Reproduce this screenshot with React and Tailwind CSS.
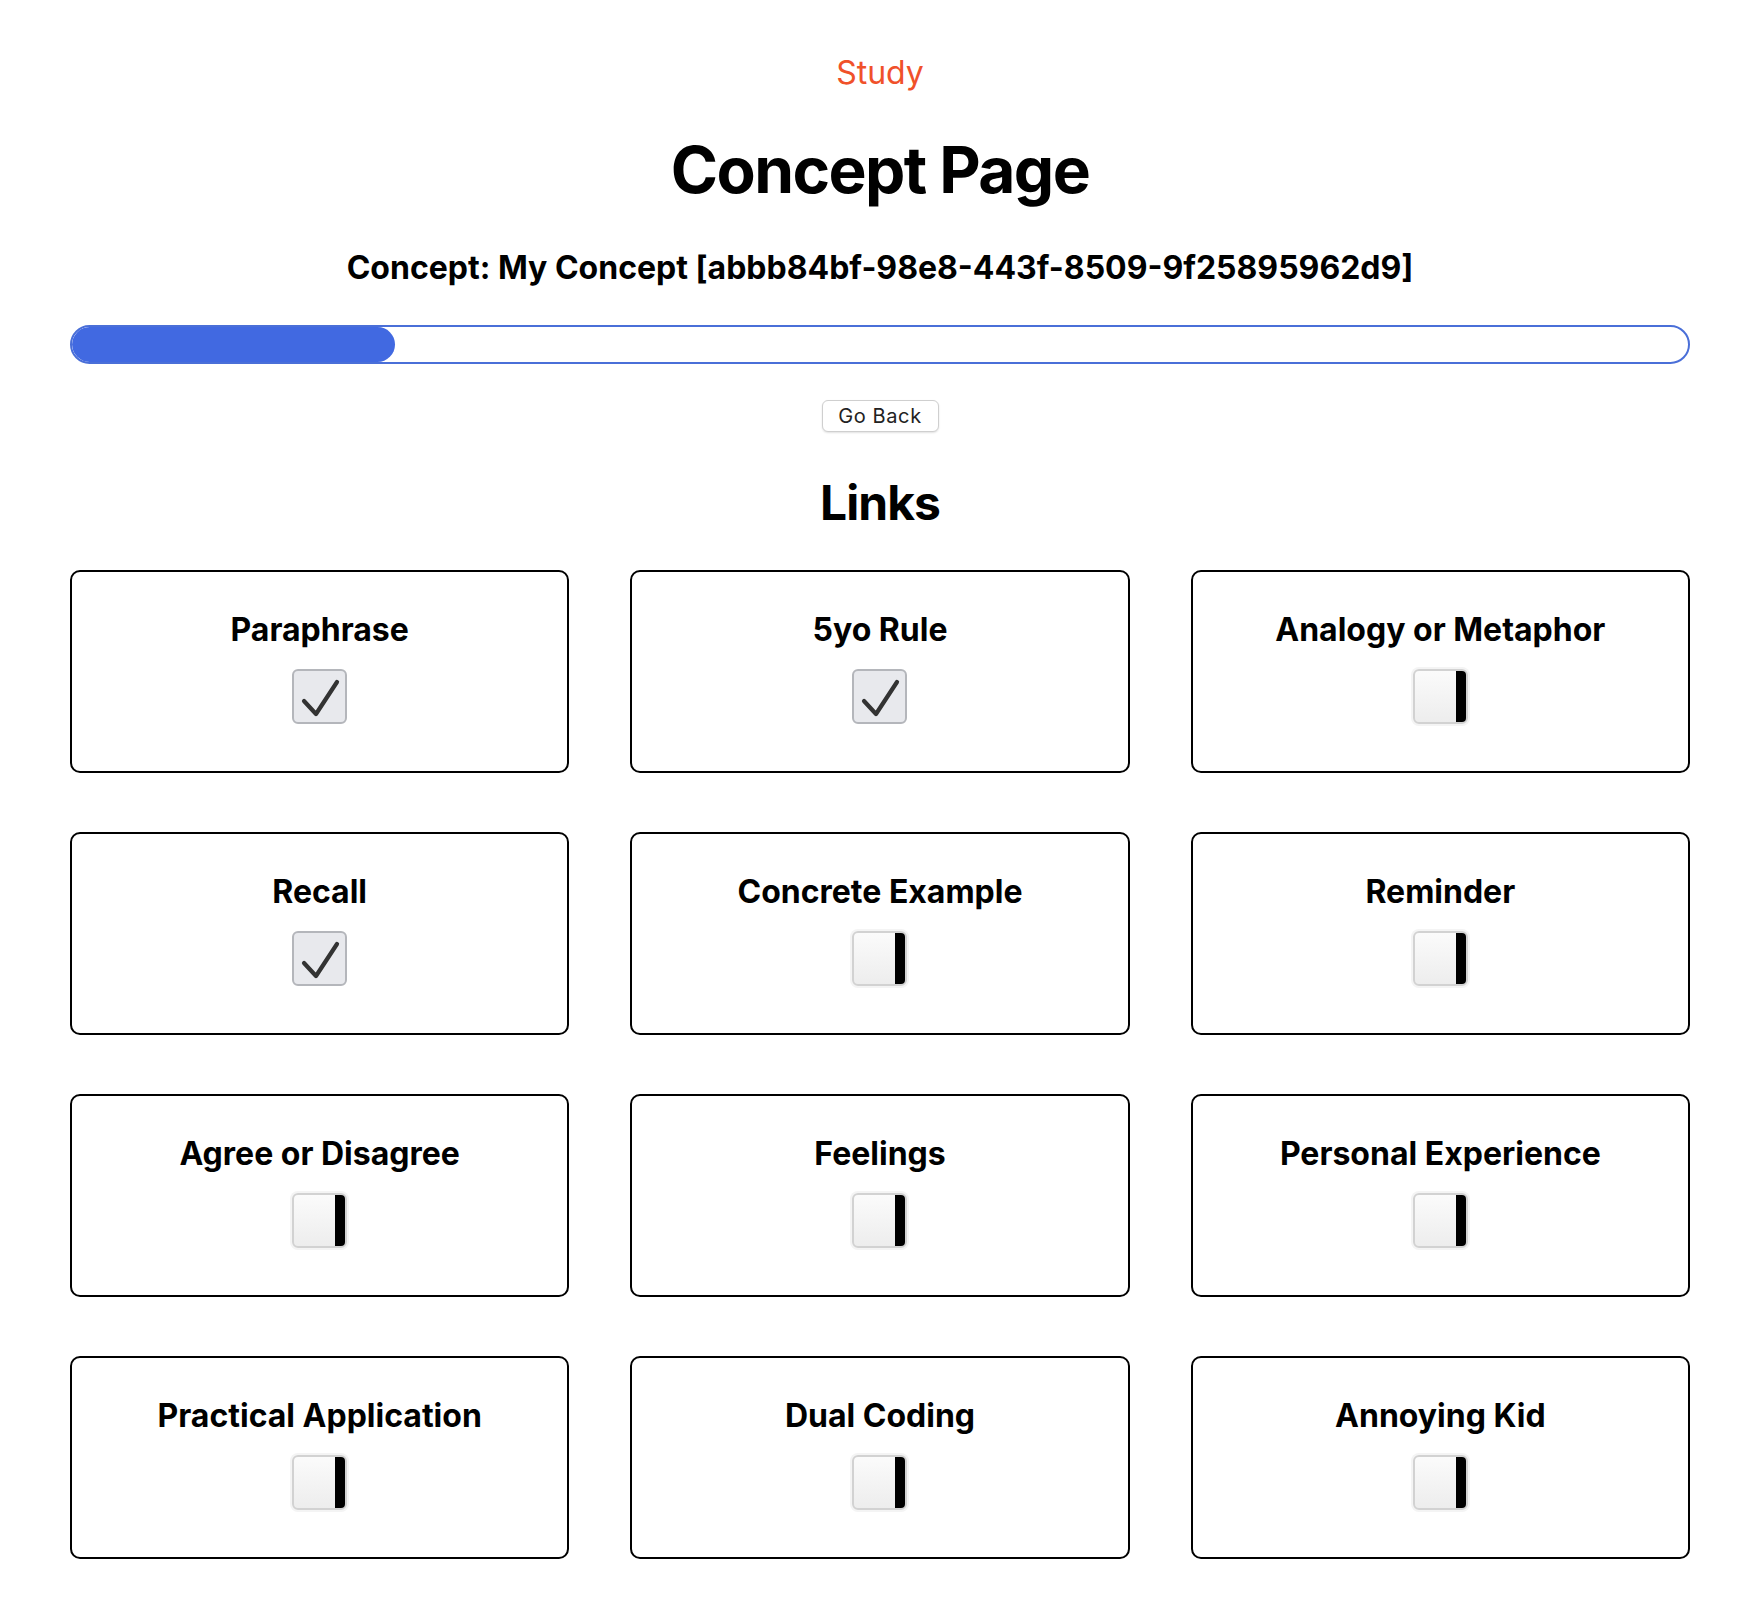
import React from "react";

const items = [
  { t: "Paraphrase", c: true },
  { t: "5yo Rule", c: true },
  { t: "Analogy or Metaphor", c: false },
  { t: "Recall", c: true },
  { t: "Concrete Example", c: false },
  { t: "Reminder", c: false },
  { t: "Agree or Disagree", c: false },
  { t: "Feelings", c: false },
  { t: "Personal Experience", c: false },
  { t: "Practical Application", c: false },
  { t: "Dual Coding", c: false },
  { t: "Annoying Kid", c: false },
];

function Box({ checked }) {
  if (checked) {
    return (
      <div className="w-[55px] h-[55px] rounded-[6px] border-2 border-[#b4b6bb] bg-[#e8e9ed] flex items-center justify-center">
        <svg width="51" height="51" viewBox="0 0 51 51">
          <path d="M10 30 L22 43 L43 11" fill="none" stroke="#333" strokeWidth="4.2" strokeLinecap="round" strokeLinejoin="round" />
        </svg>
      </div>
    );
  }
  return (
    <div className="w-[55px] h-[55px] rounded-[6px] border-2 border-[#d2d2d2] bg-gradient-to-b from-[#fbfbfb] to-[#ededed] flex justify-end shadow-[0_0_0_2px_#f4f4f4]">
      <div className="w-[10px] h-full bg-black rounded-r-[4px]" />
    </div>
  );
}

export default function App() {
  return (
    <div className="min-h-[1608px] bg-white pl-[70px] pr-[60px] text-black" style={{ fontFamily: "Inter, 'Liberation Sans', sans-serif" }}>
      <div className="pt-[53px] h-[40px] box-content text-center text-[32px] leading-[40px] text-[#f0512a]">Study</div>
      <h1 className="mt-[38px] text-center text-[64px] leading-[77px] font-bold tracking-[-0.025em]">Concept Page</h1>
      <h3 className="mt-[40px] text-center text-[32px] leading-[40px] font-bold">Concept: My Concept [abbb84bf-98e8-443f-8509-9f25895962d9]</h3>
      <div className="mt-[37px] h-[39px] rounded-full border-2 border-[#4a6fd8] bg-white overflow-hidden">
        <div className="h-full w-[20%] bg-[#4169e1] rounded-full" />
      </div>
      <div className="mt-[36px] flex justify-center">
        <button className="h-[32px] w-[117px] rounded-[6px] border border-[#cfcfcf] bg-white shadow-[0_1px_2px_rgba(0,0,0,0.12)] text-[20px] leading-[30px] text-[#222] tracking-[0.03em]">Go Back</button>
      </div>
      <h2 className="mt-[42px] text-center text-[48px] leading-[58px] font-bold tracking-[-0.02em]">Links</h2>
      <div className="mt-[38px] grid grid-cols-3 gap-x-[61px] gap-y-[59px]">
        {items.map((it) => (
          <div key={it.t} className="h-[203px] rounded-[10px] border-2 border-black flex flex-col items-center">
            <div className="mt-[38px] text-[32px] leading-[40px] font-bold">{it.t}</div>
            <div className="mt-[19px]">
              <Box checked={it.c} />
            </div>
          </div>
        ))}
      </div>
    </div>
  );
}
